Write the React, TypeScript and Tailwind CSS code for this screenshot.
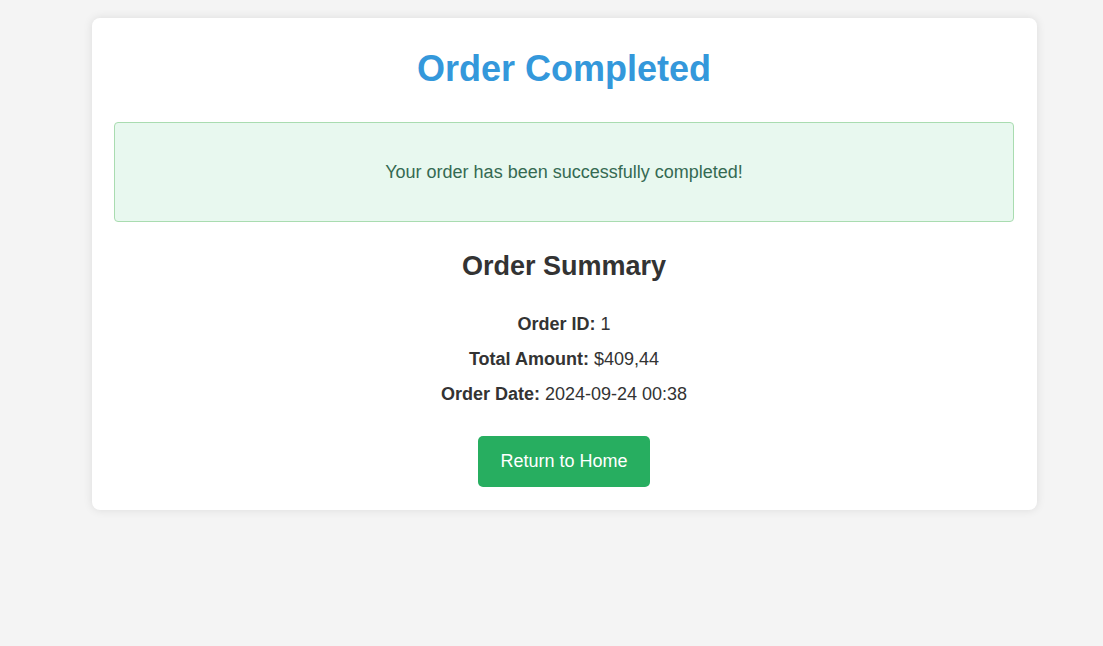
export default function App() {
  const rows = [
    { label: "Order ID:", value: "1" },
    { label: "Total Amount:", value: "$409,44" },
    { label: "Order Date:", value: "2024-09-24 00:38" },
  ];

  return (
    <div className="min-h-[646px] bg-[#f4f4f4] pt-[18px] font-['Liberation_Sans',Arial,sans-serif] text-[18px] text-[#333]">
      <div className="ml-[92px] w-[945px] rounded-[8px] bg-white pl-[22px] pr-[23px] pt-[30px] pb-[23px] shadow-[0_0_10px_rgba(0,0,0,0.1)]">
        <h1 className="text-center text-[36px] font-bold leading-[41px] text-[#3498db]">Order Completed</h1>

        <div className="mt-[33px] flex h-[100px] items-center justify-center rounded-[4px] border border-[#a9dcb0] bg-[#e8f8ef] text-[#356a52]">
          Your order has been successfully completed!
        </div>

        <h2 className="mt-[29px] text-center text-[27px] font-bold leading-[31px]">Order Summary</h2>

        <div className="mt-[32px] flex flex-col items-center gap-[14px] leading-[21px]">
          {rows.map((r) => (
            <p key={r.label}>
              <span className="font-bold">{r.label}</span> {r.value}
            </p>
          ))}
        </div>

        <div className="mt-[31px] flex justify-center">
          <button className="h-[51px] rounded-[5px] bg-[#27ae60] px-[22px] text-white">Return to Home</button>
        </div>
      </div>
    </div>
  );
}
